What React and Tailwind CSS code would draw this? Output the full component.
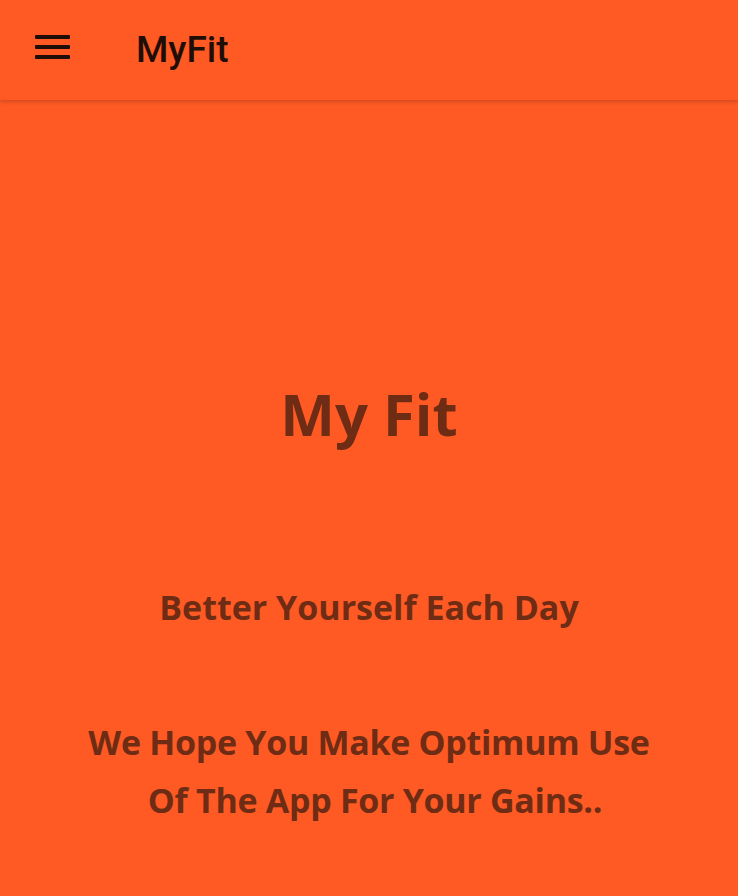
import React from "react";

export default function App() {
  return (
    <div className="w-[738px] h-[896px] bg-[#ff5a24] flex flex-col overflow-hidden">
      <header className="h-[100px] shrink-0 bg-[#ff5a24] flex items-center shadow-[0_2px_4px_rgba(0,0,0,0.18)] relative z-10">
        <div className="w-[35px] ml-[35px] mt-[-6px] flex flex-col gap-[6px]">
          <div className="h-[4px] bg-[#1f0e08] rounded-[1px]" />
          <div className="h-[4px] bg-[#1f0e08] rounded-[1px]" />
          <div className="h-[4px] bg-[#1f0e08] rounded-[1px]" />
        </div>
        <div className="ml-[66px] text-[37px] font-medium text-[#1f0e08] font-['Roboto',sans-serif] leading-none mt-[-1px]">
          MyFit
        </div>
      </header>
      <main className="flex-1 flex flex-col items-center text-[#6e2c14] font-['Open_Sans',sans-serif] font-bold">
        <div className="mt-[285px] text-[58px] leading-none">My Fit</div>
        <div className="mt-[147px] text-[34px] leading-none">Better Yourself Each Day</div>
        <div className="mt-[89px] text-[34px] leading-[58px] text-center tracking-[-0.3px]">
          <div>We Hope You Make Optimum Use</div>
          <div className="pl-[12px]">Of The App For Your Gains..</div>
        </div>
      </main>
    </div>
  );
}
